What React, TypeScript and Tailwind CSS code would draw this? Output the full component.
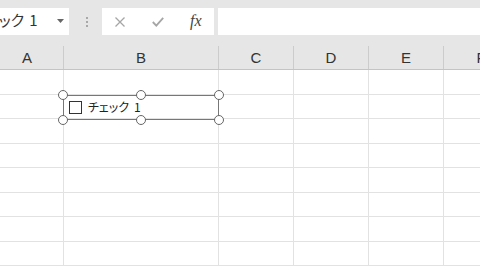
import React from "react";

const cols = [
  { label: "A", w: "w-[64px]", pad: "pr-[9px]" },
  { label: "B", w: "w-[155px]", pad: "" },
  { label: "C", w: "w-[75px]", pad: "" },
  { label: "D", w: "w-[75px]", pad: "" },
  { label: "E", w: "w-[75px]", pad: "" },
  { label: "F", w: "w-[75px]", pad: "" },
];

const rowHeights = ["h-[25px]", "h-[24px]", "h-[25px]", "h-[24px]", "h-[25px]", "h-[24px]", "h-[25px]", "h-[24px]"];

function Handle({ cls }: { cls: string }) {
  return (
    <div
      className={`absolute w-[10px] h-[10px] rounded-full bg-white border-[1.5px] border-[#666666] ${cls}`}
    />
  );
}

export default function App() {
  return (
    <div className="relative w-[480px] h-[270px] overflow-hidden bg-white font-['Noto_Sans_CJK_JP',sans-serif]">
      {/* toolbar */}
      <div className="bg-[#e6e6e6] pt-[8px] h-[45px]">
        <div className="flex h-[27px]">
          <div className="w-[69px] bg-white flex items-center overflow-hidden relative">
            <span className="whitespace-nowrap text-[15px] text-[#333] ml-[-27px] mt-[-2px] [font-feature-settings:'palt']">
              チェック<span className="ml-[5px]">1</span>
            </span>
            <svg className="absolute left-[57px] top-[11px]" width="7" height="4" viewBox="0 0 7 4">
              <path d="M0 0 L7 0 L3.5 4 Z" fill="#666" />
            </svg>
          </div>
          <div className="w-[33px] flex items-center justify-center">
            <div className="flex flex-col gap-[2px] ml-[2px]">
              <div className="w-[2px] h-[2px] bg-[#a8a8a8]" />
              <div className="w-[2px] h-[2px] bg-[#a8a8a8]" />
              <div className="w-[2px] h-[2px] bg-[#a8a8a8]" />
            </div>
          </div>
          <div className="w-[112px] bg-white relative">
            <svg className="absolute left-[13px] top-[9px]" width="10" height="10" viewBox="0 0 10 10">
              <path d="M0.5 0.5 L9.5 9.5 M9.5 0.5 L0.5 9.5" stroke="#a6a6a6" strokeWidth="1.3" />
            </svg>
            <svg className="absolute left-[50px] top-[9px]" width="12" height="10" viewBox="0 0 12 10">
              <path d="M0.8 5 L4.3 8.6 L11.2 0.8" stroke="#a6a6a6" strokeWidth="1.8" fill="none" />
            </svg>
            <span className="absolute left-[88px] top-[1px] text-[16px] italic text-[#444] font-['Liberation_Serif',serif]">
              fx
            </span>
          </div>
          <div className="w-[4px]" />
          <div className="flex-1 bg-white" />
        </div>
      </div>

      {/* header */}
      <div className="flex h-[26px] bg-[#e6e6e6] border-b border-[#c4c4c4] mt-[-1px]">
        {cols.map((c) => (
          <div key={c.label} className={`${c.w} shrink-0 flex items-end`}>
            <div
              className={`flex-1 h-[23px] flex items-center justify-center pt-[2px] border-r border-[#cccccc] text-[15px] text-[#333] font-['Liberation_Sans',sans-serif] ${c.pad}`}
            >
              {c.label}
            </div>
          </div>
        ))}
      </div>

      {/* grid */}
      <div>
        {rowHeights.map((h, i) => (
          <div key={i} className={`flex ${h} border-b border-[#e2e2e2]`}>
            {cols.map((c) => (
              <div key={c.label} className={`${c.w} shrink-0 border-r border-[#e2e2e2]`} />
            ))}
          </div>
        ))}
      </div>

      {/* checkbox control */}
      <div className="absolute left-[63px] top-[95px] w-[156px] h-[25px] border border-[#777777]">
        <div className="absolute left-[5px] top-[5px] w-[13px] h-[13px] border border-[#333] bg-white" />
        <span className="absolute left-[24px] top-[2px] text-[12px] text-[#222] whitespace-nowrap [font-feature-settings:'palt']">
          チェック<span className="ml-[5px]">1</span>
        </span>
        <Handle cls="left-[-6px] top-[-6px]" />
        <Handle cls="left-[72px] top-[-6px]" />
        <Handle cls="right-[-6px] top-[-6px]" />
        <Handle cls="left-[-6px] bottom-[-6px]" />
        <Handle cls="left-[72px] bottom-[-6px]" />
        <Handle cls="right-[-6px] bottom-[-6px]" />
      </div>
    </div>
  );
}
